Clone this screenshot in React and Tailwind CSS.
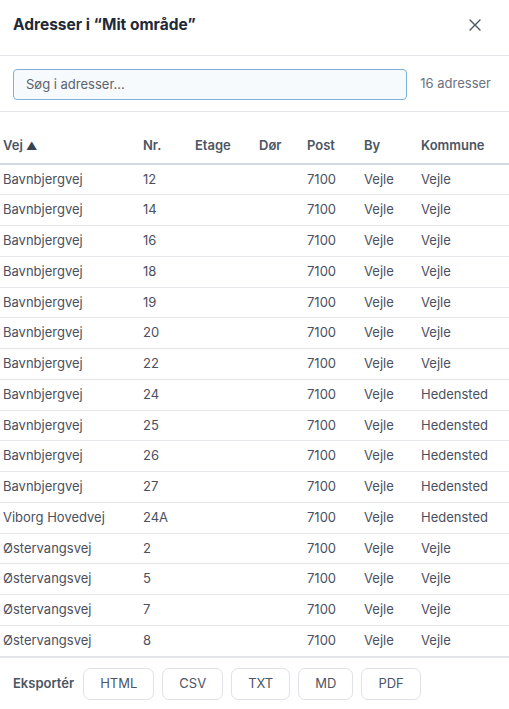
import { useState } from "react"

const rows = [
  ["Bavnbjergvej", "12", "Vejle"],
  ["Bavnbjergvej", "14", "Vejle"],
  ["Bavnbjergvej", "16", "Vejle"],
  ["Bavnbjergvej", "18", "Vejle"],
  ["Bavnbjergvej", "19", "Vejle"],
  ["Bavnbjergvej", "20", "Vejle"],
  ["Bavnbjergvej", "22", "Vejle"],
  ["Bavnbjergvej", "24", "Hedensted"],
  ["Bavnbjergvej", "25", "Hedensted"],
  ["Bavnbjergvej", "26", "Hedensted"],
  ["Bavnbjergvej", "27", "Hedensted"],
  ["Viborg Hovedvej", "24A", "Hedensted"],
  ["Østervangsvej", "2", "Vejle"],
  ["Østervangsvej", "5", "Vejle"],
  ["Østervangsvej", "7", "Vejle"],
  ["Østervangsvej", "8", "Vejle"],
]

const formats = ["HTML", "CSV", "TXT", "MD", "PDF"]

export default function App() {
  const [query, setQuery] = useState("")

  return (
    <div className="w-[509px] h-[709px] bg-white flex flex-col overflow-hidden font-['Inter','Noto_Sans',sans-serif]">
      {/* Header */}
      <div className="h-[56px] shrink-0 flex items-center justify-between pl-[13px] pr-[28px] border-b border-[#e2e4e8]">
        <h2 className="text-[15.5px] font-bold text-[#1f2937] -mt-[6px]">Adresser i “Mit område”</h2>
        <button className="text-[#4b5563] -mt-[6px]" aria-label="Luk">
          <svg width="12" height="12" viewBox="0 0 12 12" fill="none" stroke="currentColor" strokeWidth="1.4" strokeLinecap="round">
            <path d="M1 1L11 11M11 1L1 11" />
          </svg>
        </button>
      </div>

      {/* Search */}
      <div className="h-[56px] shrink-0 flex items-center gap-[13px] pl-[13px] pr-[18px] pt-[1px] border-b border-[#e2e4e8]">
        <input
          value={query}
          onChange={(e) => setQuery(e.target.value)}
          placeholder="Søg i adresser..."
          className="w-[396px] h-[31px] rounded-[4px] border border-[#7fb0d8] bg-[#f7fafc] px-[12px] text-[13px] text-[#374151] placeholder:text-[#5b6270] outline-none"
        />
        <span className="text-[13px] text-[#6b7280] whitespace-nowrap">16 adresser</span>
      </div>

      {/* Table */}
      <div className="flex-1 pt-[16px]">
        <table className="w-full border-collapse text-[13px] table-fixed">
          <colgroup>
            <col className="w-[140px]" />
            <col className="w-[52px]" />
            <col className="w-[64px]" />
            <col className="w-[48px]" />
            <col className="w-[57px]" />
            <col className="w-[57px]" />
            <col />
          </colgroup>
          <thead>
            <tr className="h-[36px] border-b-2 border-[#d3d9e0] text-left text-[#4b5563] font-semibold">
              <th className="pl-[3px] font-semibold">
                Vej <span className="text-[11px] text-[#374151]">▲</span>
              </th>
              <th className="pl-[3px] font-semibold">Nr.</th>
              <th className="pl-[3px] font-semibold">Etage</th>
              <th className="pl-[3px] font-semibold">Dør</th>
              <th className="pl-[3px] font-semibold">Post</th>
              <th className="pl-[3px] font-semibold">By</th>
              <th className="pl-[3px] font-semibold">Kommune</th>
            </tr>
          </thead>
          <tbody className="text-[#4b5060]">
            {rows.map(([vej, nr, kommune], i) => (
              <tr key={i} className="h-[30.75px] border-b border-[#e5e7eb] last:border-b-0">
                <td className="pl-[3px]">{vej}</td>
                <td className="pl-[3px]">{nr}</td>
                <td className="pl-[3px]"></td>
                <td className="pl-[3px]"></td>
                <td className="pl-[3px]">7100</td>
                <td className="pl-[3px]">Vejle</td>
                <td className="pl-[3px]">{kommune}</td>
              </tr>
            ))}
          </tbody>
        </table>
      </div>

      {/* Export */}
      <div className="h-[54px] shrink-0 border-t-2 border-[#e2e4e8] flex items-center gap-[8px] pl-[13px]">
        <span className="text-[13px] font-semibold text-[#4b5563] mr-[1px]">Eksportér</span>
        {formats.map((f) => (
          <button
            key={f}
            className="h-[32px] px-[16px] rounded-[7px] border border-[#dfe2e6] bg-white text-[13px] text-[#4b5563]"
          >
            {f}
          </button>
        ))}
      </div>
    </div>
  )
}
